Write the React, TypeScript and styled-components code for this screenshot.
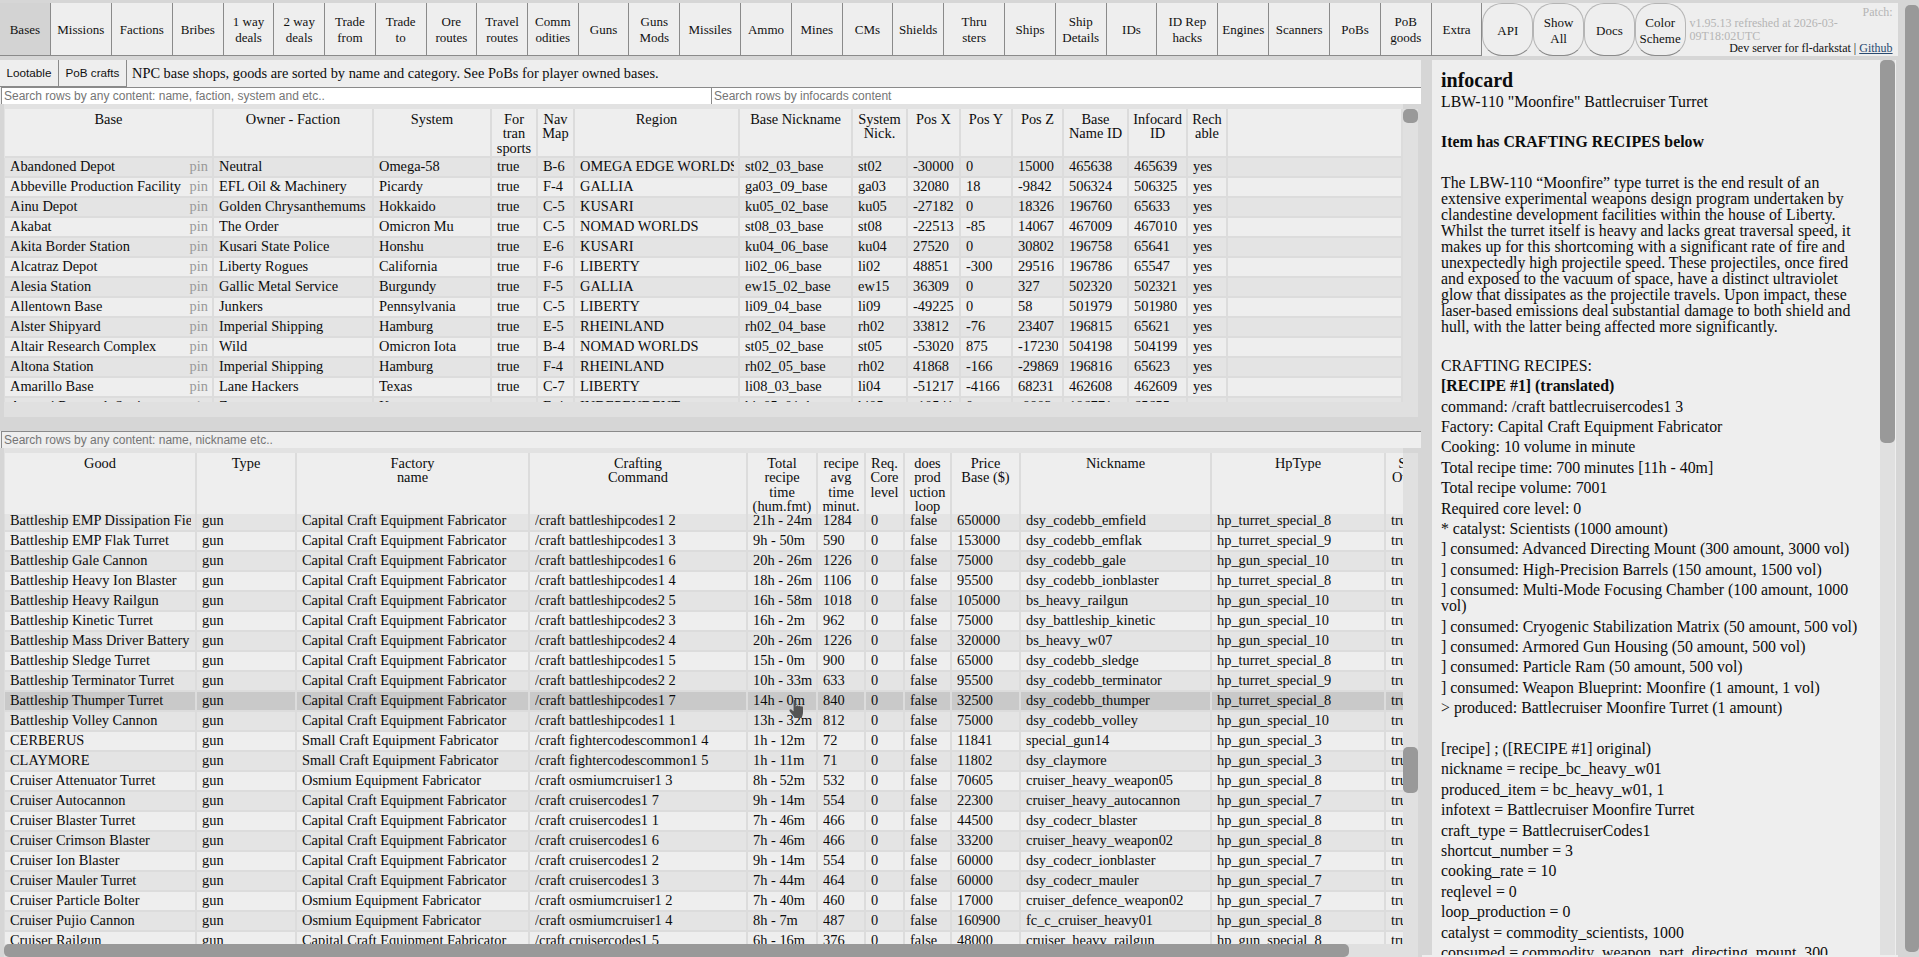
import React from "react";
import styled, { createGlobalStyle } from "styled-components";

const Global = createGlobalStyle`
  html, body { margin: 0; padding: 0; height: 100%; overflow: hidden; background: #d6d6d6; }
  body { font-family: "Liberation Serif", "Times New Roman", serif; color: #0c0c0c; }
  * { box-sizing: border-box; }
`;

const Root = styled.div`
  position: relative;
  display: flex;
  width: 1919px;
  height: 957px;
  overflow: hidden;
`;
const Page = styled.div`
  width: 1898px;
  padding-top: 3px;
  display: flex;
  flex-direction: column;
`;
const Gutter = styled.div`
  flex: 1;
  padding: 5px 0 0 7px;
`;
const GutterThumb = styled.div`
  width: 14px;
  height: 947px;
  background: #999;
  border-radius: 5px;
`;

const Nav = styled.nav`
  display: flex;
  height: 53px;
  background: #eee;
  flex: none;
`;
const Tab = styled.button<{ $wide?: boolean; $active?: boolean }>`
  width: ${(p) => (p.$wide ? "61.1px" : "50.72px")};
  height: 53px;
  flex: none;
  padding: 2px 0 0;
  margin: 0;
  border: none;
  border-right: 1px solid #8a8a8a;
  border-bottom: 1px solid #8a8a8a;
  background: ${(p) => (p.$active ? "#d3d3d3" : "#eee")};
  font: 13px/15.7px "Liberation Serif", serif;
  color: #111;
  white-space: pre-line;
`;
const RoundTab = styled.button`
  width: 50.8px;
  height: 53px;
  flex: none;
  padding: 2px 0 0;
  margin: 0;
  border: 1px solid #b5b5b5;
  border-bottom-color: #8a8a8a;
  border-radius: 20px;
  background: #eee;
  font: 13px/15.7px "Liberation Serif", serif;
  color: #111;
  white-space: pre-line;
`;
const NavInfo = styled.div`
  width: 203px;
  margin-left: 4px;
  padding-top: 3px;
  font-size: 12px;
  line-height: 12.3px;
`;
const Patch = styled.div`
  text-align: right;
  color: #b5b5b5;
  margin-bottom: -1px;
`;
const Version = styled.div`
  color: #b5b5b5;
`;
const DevLine = styled.div`
  text-align: right;
  color: #111;
  a { color: #2a4a70; text-decoration: underline; }
`;

const Main = styled.div`
  flex: 1;
  display: flex;
  margin-top: 4px;
  min-height: 0;
`;
const LeftCol = styled.div`
  width: 1421px;
  flex: none;
  display: flex;
  flex-direction: column;
`;
const SubBar = styled.div`
  height: 27px;
  background: #eee;
  display: flex;
  align-items: stretch;
  flex: none;
`;
const SubButton = styled.button<{ $w: number }>`
  width: ${(p) => p.$w}px;
  padding: 0 0 2px;
  margin: 0;
  border: none;
  border-right: 1px solid #8a8a8a;
  border-bottom: 1px solid #8a8a8a;
  background: #eee;
  font: 11.7px "Liberation Sans", Arial, sans-serif;
  color: #111;
`;
const SubText = styled.div`
  margin-left: 5px;
  font-size: 14.4px;
  line-height: 27px;
`;
const SearchRow = styled.div`
  display: flex;
  height: 17px;
  flex: none;
  padding-left: 1px;
  background: #eee;
`;
const SearchInput = styled.input<{ $dim?: boolean }>`
  flex: 1;
  min-width: 0;
  height: 17px;
  padding: 0 2px;
  border: none;
  border-top: 1px solid #8a8a8a;
  border-left: 1px solid #8a8a8a;
  border-radius: 0;
  outline: none;
  background: ${(p) => (p.$dim ? "#eee" : "#fff")};
  font: 12px "Liberation Sans", Arial, sans-serif;
  &::placeholder { color: #757575; opacity: 1; }
`;

const Frame = styled.section<{ $grow?: boolean }>`
  display: flex;
  background: #d6d6d6;
  padding: 5px 3px 0 4px;
  ${(p) => (p.$grow ? "flex: 1; min-height: 0;" : "height: 313px; flex: none;")}
`;
const Viewport = styled.div`
  width: 1399px;
  flex: none;
  display: flex;
  flex-direction: column;
  min-height: 0;
  margin-top: -5px;
  padding-top: 5px;
  background: #e2e2e2;
`;
const Clip = styled.div`
  flex: 1;
  min-height: 0;
  overflow: hidden;
  padding-left: 1px;
  background: #dcdcdc;
`;
const Scroller = styled.div<{ $offset: number }>`
  margin-top: ${(p) => -p.$offset}px;
`;
const HeadClip = styled.div`
  position: relative;
  z-index: 1;
  padding-left: 1px;
  overflow: hidden;
  flex: none;
`;
const Table = styled.table<{ $width: number }>`
  table-layout: fixed;
  border-collapse: separate;
  border-spacing: 0;
  width: ${(p) => p.$width}px;
`;
const Th = styled.th<{ $noGap?: boolean }>`
  background: #eee;
  border-right: 2px solid #dcdcdc;
  border-bottom: ${(p) => (p.$noGap ? "0" : "2px")} solid #dcdcdc;
  padding: 3px 1px 1px;
  font-weight: normal;
  font-size: 14.4px;
  line-height: 14.33px;
  text-align: center;
  vertical-align: top;
  white-space: pre-line;
  overflow: hidden;
`;
const Tr = styled.tr<{ $alt: boolean; $hot?: boolean }>`
  background: ${(p) => (p.$hot ? "#c9c9c9" : p.$alt ? "#e4e4e4" : "#eee")};
`;
const Td = styled.td`
  height: 20px;
  padding: 0 4px 0 5px;
  border-right: 2px solid #dcdcdc;
  border-bottom: 2px solid #dcdcdc;
  font-size: 14.4px;
  line-height: 17px;
  vertical-align: top;
`;
const CellText = styled.div`
  white-space: nowrap;
  overflow: hidden;
`;
const BaseCell = styled.div`
  display: flex;
  justify-content: space-between;
`;
const Pin = styled.span`
  color: #999;
`;
const HTrack = styled.div<{ $h: number }>`
  height: ${(p) => p.$h}px;
  flex: none;
  background: #e0e0e0;
`;
const HThumb = styled.div<{ $w: number }>`
  width: ${(p) => p.$w}px;
  height: 100%;
  background: #999;
  border-radius: 5px;
`;
const VTrack = styled.div`
  width: 15px;
  flex: none;
  background: #e0e0e0;
`;
const VThumb = styled.div<{ $top: number; $h: number }>`
  height: ${(p) => p.$h}px;
  margin-top: ${(p) => p.$top}px;
  background: #999;
  border-radius: 5px;
`;
const Gap = styled.div`
  height: 14px;
  flex: none;
`;
const SearchAlone = styled.div`
  height: 17px;
  flex: none;
  display: flex;
  padding-left: 1px;
  background: #eee;
`;

const RightCol = styled.div`
  flex: 1;
  padding-left: 11px;
  display: flex;
  flex-direction: column;
  min-width: 0;
`;
const Panel = styled.aside`
  width: 464px;
  height: 895px;
  flex: none;
  background: #eee;
  display: flex;
  overflow: hidden;
`;
const Card = styled.div`
  width: 448px;
  flex: none;
  padding: 9px 9px 0 9px;
  font-size: 15.84px;
  line-height: 16.2px;
  overflow: hidden;
`;
const CardTitle = styled.h2`
  margin: 0 0 1.5px;
  font-size: 20px;
  line-height: 23px;
  font-weight: bold;
`;
const CardBody = styled.div`
  width: 431px;
`;
const Line = styled.div<{ $bold?: boolean }>`
  min-height: 16.2px;
  margin-bottom: 4.2px;
  font-weight: ${(p) => (p.$bold ? "bold" : "normal")};
`;
const Prose = styled.div`
  margin-bottom: 2.4px;
  line-height: 16px;
`;
const BottomStrip = styled.div`
  height: 2px;
  margin-left: -10px;
  background: #eee;
`;
const Cursor = styled.svg`
  position: absolute;
  left: 788px;
  top: 699px;
`;

const bases: string[][] = [
  ["Abandoned Depot", "Neutral", "Omega-58", "B-6", "OMEGA EDGE WORLDS", "st02_03_base", "st02", "-30000", "0", "15000", "465638", "465639"],
  ["Abbeville Production Facility", "EFL Oil & Machinery", "Picardy", "F-4", "GALLIA", "ga03_09_base", "ga03", "32080", "18", "-9842", "506324", "506325"],
  ["Ainu Depot", "Golden Chrysanthemums", "Hokkaido", "C-5", "KUSARI", "ku05_02_base", "ku05", "-27182", "0", "18326", "196760", "65633"],
  ["Akabat", "The Order", "Omicron Mu", "C-5", "NOMAD WORLDS", "st08_03_base", "st08", "-22513", "-85", "14067", "467009", "467010"],
  ["Akita Border Station", "Kusari State Police", "Honshu", "E-6", "KUSARI", "ku04_06_base", "ku04", "27520", "0", "30802", "196758", "65641"],
  ["Alcatraz Depot", "Liberty Rogues", "California", "F-6", "LIBERTY", "li02_06_base", "li02", "48851", "-300", "29516", "196786", "65547"],
  ["Alesia Station", "Gallic Metal Service", "Burgundy", "F-5", "GALLIA", "ew15_02_base", "ew15", "36309", "0", "327", "502320", "502321"],
  ["Allentown Base", "Junkers", "Pennsylvania", "C-5", "LIBERTY", "li09_04_base", "li09", "-49225", "0", "58", "501979", "501980"],
  ["Alster Shipyard", "Imperial Shipping", "Hamburg", "E-5", "RHEINLAND", "rh02_04_base", "rh02", "33812", "-76", "23407", "196815", "65621"],
  ["Altair Research Complex", "Wild", "Omicron Iota", "B-4", "NOMAD WORLDS", "st05_02_base", "st05", "-53020", "875", "-17230", "504198", "504199"],
  ["Altona Station", "Imperial Shipping", "Hamburg", "F-4", "RHEINLAND", "rh02_05_base", "rh02", "41868", "-166", "-29869", "196816", "65623"],
  ["Amarillo Base", "Lane Hackers", "Texas", "C-7", "LIBERTY", "li08_03_base", "li04", "-51217", "-4166", "68231", "462608", "462609"],
  ["Aomori Research Station", "Zoners", "Kyoto", "E-4", "INDEPENDENT", "hi_05_01_base", "hi05", "-10541", "0", "-8803", "196771", "65655"],
];

const CAP = "Capital Craft Equipment Fabricator";
const OSM = "Osmium Equipment Fabricator";
const SMALL = "Small Craft Equipment Fabricator";
const goods: string[][] = [
  ["Battleship EMP Dissipation Field", CAP, "/craft battleshipcodes1 2", "21h - 24m", "1284", "650000", "dsy_codebb_emfield", "hp_turret_special_8"],
  ["Battleship EMP Flak Turret", CAP, "/craft battleshipcodes1 3", "9h - 50m", "590", "153000", "dsy_codebb_emflak", "hp_turret_special_9"],
  ["Battleship Gale Cannon", CAP, "/craft battleshipcodes1 6", "20h - 26m", "1226", "75000", "dsy_codebb_gale", "hp_gun_special_10"],
  ["Battleship Heavy Ion Blaster", CAP, "/craft battleshipcodes1 4", "18h - 26m", "1106", "95500", "dsy_codebb_ionblaster", "hp_turret_special_8"],
  ["Battleship Heavy Railgun", CAP, "/craft battleshipcodes2 5", "16h - 58m", "1018", "105000", "bs_heavy_railgun", "hp_gun_special_10"],
  ["Battleship Kinetic Turret", CAP, "/craft battleshipcodes2 3", "16h - 2m", "962", "75000", "dsy_battleship_kinetic", "hp_gun_special_10"],
  ["Battleship Mass Driver Battery", CAP, "/craft battleshipcodes2 4", "20h - 26m", "1226", "320000", "bs_heavy_w07", "hp_gun_special_10"],
  ["Battleship Sledge Turret", CAP, "/craft battleshipcodes1 5", "15h - 0m", "900", "65000", "dsy_codebb_sledge", "hp_turret_special_8"],
  ["Battleship Terminator Turret", CAP, "/craft battleshipcodes2 2", "10h - 33m", "633", "95500", "dsy_codebb_terminator", "hp_turret_special_9"],
  ["Battleship Thumper Turret", CAP, "/craft battleshipcodes1 7", "14h - 0m", "840", "32500", "dsy_codebb_thumper", "hp_turret_special_8"],
  ["Battleship Volley Cannon", CAP, "/craft battleshipcodes1 1", "13h - 32m", "812", "75000", "dsy_codebb_volley", "hp_gun_special_10"],
  ["CERBERUS", SMALL, "/craft fightercodescommon1 4", "1h - 12m", "72", "11841", "special_gun14", "hp_gun_special_3"],
  ["CLAYMORE", SMALL, "/craft fightercodescommon1 5", "1h - 11m", "71", "11802", "dsy_claymore", "hp_gun_special_3"],
  ["Cruiser Attenuator Turret", OSM, "/craft osmiumcruiser1 3", "8h - 52m", "532", "70605", "cruiser_heavy_weapon05", "hp_gun_special_8"],
  ["Cruiser Autocannon", CAP, "/craft cruisercodes1 7", "9h - 14m", "554", "22300", "cruiser_heavy_autocannon", "hp_gun_special_7"],
  ["Cruiser Blaster Turret", CAP, "/craft cruisercodes1 1", "7h - 46m", "466", "44500", "dsy_codecr_blaster", "hp_gun_special_8"],
  ["Cruiser Crimson Blaster", CAP, "/craft cruisercodes1 6", "7h - 46m", "466", "33200", "cruiser_heavy_weapon02", "hp_gun_special_8"],
  ["Cruiser Ion Blaster", CAP, "/craft cruisercodes1 2", "9h - 14m", "554", "60000", "dsy_codecr_ionblaster", "hp_gun_special_7"],
  ["Cruiser Mauler Turret", CAP, "/craft cruisercodes1 3", "7h - 44m", "464", "60000", "dsy_codecr_mauler", "hp_gun_special_7"],
  ["Cruiser Particle Bolter", OSM, "/craft osmiumcruiser1 2", "7h - 40m", "460", "17000", "cruiser_defence_weapon02", "hp_gun_special_7"],
  ["Cruiser Pujio Cannon", OSM, "/craft osmiumcruiser1 4", "8h - 7m", "487", "160900", "fc_c_cruiser_heavy01", "hp_gun_special_8"],
  ["Cruiser Railgun", CAP, "/craft cruisercodes1 5", "6h - 16m", "376", "48000", "cruiser_heavy_railgun", "hp_gun_special_8"],
];

const tabs: [string, boolean][] = [
  ["Bases", false], ["Missions", true], ["Factions", true], ["Bribes", false], ["1 way\ndeals", false],
  ["2 way\ndeals", false], ["Trade\nfrom", false], ["Trade\nto", false], ["Ore\nroutes", false], ["Travel\nroutes", false],
  ["Comm\nodities", false], ["Guns", false], ["Guns\nMods", false], ["Missiles", true], ["Ammo", false],
  ["Mines", false], ["CMs", false], ["Shields", false], ["Thru\nsters", true], ["Ships", false],
  ["Ship\nDetails", false], ["IDs", false], ["ID Rep\nhacks", true], ["Engines", false], ["Scanners", true],
  ["PoBs", false], ["PoB\ngoods", false], ["Extra", false],
];
const roundTabs = ["API", "Show\nAll", "Docs", "Color\nScheme"];

const baseCols = [209, 160, 118, 46, 37, 165, 113, 55, 53, 52, 51, 65, 59, 40, 175];
const baseHead = ["Base", "Owner - Faction", "System", "For\ntran\nsports", "Nav\nMap", "Region", "Base Nickname", "System\nNick.", "Pos X", "Pos Y", "Pos Z", "Base\nName ID", "Infocard\nID", "Rech\nable", ""];
const goodCols = [192, 100, 233, 218, 70, 48, 39, 47, 69, 191, 174, 53];
const goodHead = ["Good", "Type", "Factory\nname", "Crafting\nCommand", "Total\nrecipe\ntime\n(hum.fmt)", "recipe\navg\ntime\nminut.", "Req.\nCore\nlevel", "does\nprod\nuction\nloop", "Price\nBase ($)", "Nickname", "HpType", "Ship\nOwner"];

const sum = (a: number[]) => a.reduce((x, y) => x + y, 0);
const Cols = ({ widths }: { widths: number[] }) => (
  <colgroup>
    {widths.map((w, i) => (
      <col key={i} width={w} />
    ))}
  </colgroup>
);
const Cell = ({ children }: { children?: React.ReactNode }) => (
  <Td><CellText>{children}</CellText></Td>
);

const recipe = [
  "command: /craft battlecruisercodes1 3",
  "Factory: Capital Craft Equipment Fabricator",
  "Cooking: 10 volume in minute",
  "Total recipe time: 700 minutes [11h - 40m]",
  "Total recipe volume: 7001",
  "Required core level: 0",
  "* catalyst: Scientists (1000 amount)",
  "] consumed: Advanced Directing Mount (300 amount, 3000 vol)",
  "] consumed: High-Precision Barrels (150 amount, 1500 vol)",
  "] consumed: Multi-Mode Focusing Chamber (100 amount, 1000 vol)",
  "] consumed: Cryogenic Stabilization Matrix (50 amount, 500 vol)",
  "] consumed: Armored Gun Housing (50 amount, 500 vol)",
  "] consumed: Particle Ram (50 amount, 500 vol)",
  "] consumed: Weapon Blueprint: Moonfire (1 amount, 1 vol)",
  "> produced: Battlecruiser Moonfire Turret (1 amount)",
];
const original = [
  "[recipe] ; ([RECIPE #1] original)",
  "nickname = recipe_bc_heavy_w01",
  "produced_item = bc_heavy_w01, 1",
  "infotext = Battlecruiser Moonfire Turret",
  "craft_type = BattlecruiserCodes1",
  "shortcut_number = 3",
  "cooking_rate = 10",
  "reqlevel = 0",
  "loop_production = 0",
  "catalyst = commodity_scientists, 1000",
  "consumed = commodity_weapon_part_directing_mount, 300",
];

export default function App() {
  return (
    <Root>
      <Global />
      <Page>
        <Nav>
          {tabs.map(([t, wide], i) => (
            <Tab key={t} $wide={wide} $active={i === 0}>{t}</Tab>
          ))}
          {roundTabs.map((t) => (
            <RoundTab key={t}>{t}</RoundTab>
          ))}
          <NavInfo>
            <Patch>Patch:</Patch>
            <Version>v1.95.13 refreshed at 2026-03-09T18:02UTC</Version>
            <DevLine>Dev server for fl-darkstat | <a href="#github">Github</a></DevLine>
          </NavInfo>
        </Nav>
        <Main>
          <LeftCol>
            <SubBar>
              <SubButton $w={59}>Lootable</SubButton>
              <SubButton $w={68}>PoB crafts</SubButton>
              <SubText>NPC base shops, goods are sorted by name and category. See PoBs for player owned bases.</SubText>
            </SubBar>
            <SearchRow>
              <SearchInput placeholder="Search rows by any content: name, faction, system and etc.." />
              <SearchInput placeholder="Search rows by infocards content" />
            </SearchRow>
            <Frame>
              <Viewport>
                <HeadClip>
                  <Table $width={sum(baseCols)}>
                    <Cols widths={baseCols} />
                    <thead>
                      <tr>{baseHead.map((h, i) => <Th key={i}>{h}</Th>)}</tr>
                    </thead>
                  </Table>
                </HeadClip>
                <Clip>
                  <Table $width={sum(baseCols)}>
                    <Cols widths={baseCols} />
                    <tbody>
                      {bases.map((r, i) => (
                        <Tr key={r[0]} $alt={i % 2 === 0}>
                          <Cell><BaseCell><span>{r[0]}</span><Pin>pin</Pin></BaseCell></Cell>
                          <Cell>{r[1]}</Cell>
                          <Cell>{r[2]}</Cell>
                          <Cell>true</Cell>
                          {r.slice(3).map((c, j) => <Cell key={j}>{c}</Cell>)}
                          <Cell>yes</Cell>
                          <Cell />
                        </Tr>
                      ))}
                    </tbody>
                  </Table>
                </Clip>
                <HTrack $h={15} />
              </Viewport>
              <VTrack><VThumb $top={0} $h={14} /></VTrack>
            </Frame>
            <Gap />
            <SearchAlone>
              <SearchInput $dim placeholder="Search rows by any content: name, nickname etc.." />
            </SearchAlone>
            <Frame $grow>
              <Viewport>
                <HeadClip>
                  <Table $width={sum(goodCols)}>
                    <Cols widths={goodCols} />
                    <thead>
                      <tr>{goodHead.map((h, i) => <Th key={i} $noGap>{h}</Th>)}</tr>
                    </thead>
                  </Table>
                </HeadClip>
                <Clip>
                  <Scroller $offset={2}>
                    <Table $width={sum(goodCols)}>
                      <Cols widths={goodCols} />
                      <tbody>
                        {goods.map((r, i) => (
                          <Tr key={r[0]} $alt={i % 2 === 0} $hot={i === 9}>
                            <Cell>{r[0]}</Cell>
                            <Cell>gun</Cell>
                            <Cell>{r[1]}</Cell>
                            <Cell>{r[2]}</Cell>
                            <Cell>{r[3]}</Cell>
                            <Cell>{r[4]}</Cell>
                            <Cell>0</Cell>
                            <Cell>false</Cell>
                            <Cell>{r[5]}</Cell>
                            <Cell>{r[6]}</Cell>
                            <Cell>{r[7]}</Cell>
                            <Cell>true</Cell>
                          </Tr>
                        ))}
                      </tbody>
                    </Table>
                  </Scroller>
                </Clip>
                <HTrack $h={13}><HThumb $w={1345} /></HTrack>
              </Viewport>
              <VTrack><VThumb $top={294} $h={46} /></VTrack>
            </Frame>
          </LeftCol>
          <RightCol>
            <Panel>
              <Card>
                <CardTitle>infocard</CardTitle>
                <CardBody>
                  <Line>LBW-110 "Moonfire" Battlecruiser Turret</Line>
                  <Line />
                  <Line $bold>Item has CRAFTING RECIPES below</Line>
                  <Line />
                  <Prose>
                    The LBW-110 “Moonfire” type turret is the end result of an extensive experimental weapons design program undertaken by clandestine development facilities within the house of Liberty. Whilst the turret itself is heavy and lacks great traversal speed, it makes up for this shortcoming with a significant rate of fire and unexpectedly high projectile speed. These projectiles, once fired and exposed to the vacuum of space, have a distinct ultraviolet glow that dissipates as the projectile travels. Upon impact, these laser-based emissions deal substantial damage to both shield and hull, with the latter being affected more significantly.
                  </Prose>
                  <Line />
                  <Line>CRAFTING RECIPES:</Line>
                  <Line $bold>[RECIPE #1] (translated)</Line>
                  {recipe.map((l) => <Line key={l}>{l}</Line>)}
                  <Line />
                  {original.map((l) => <Line key={l}>{l}</Line>)}
                </CardBody>
              </Card>
              <VTrack><VThumb $top={0} $h={383} /></VTrack>
            </Panel>
            <BottomStrip />
          </RightCol>
        </Main>
      </Page>
      <Gutter><GutterThumb /></Gutter>
      <Cursor width="20" height="20" viewBox="0 0 18 18">
        <path d="M5 1.5C5 .6 7 .6 7 1.5V7l.3-.5C7.500 5.600 9.200 5.600 9.400 6.700 9.600 5.900 11.300 5.900 11.500 7 11.800 6.300 13.500 6.400 13.500 7.600V12C13.500 14 12.800 15.500 12.300 17H6C5 15 2.500 12.500 1.500 11 .8 9.900 2.200 8.800 3.200 9.600L5 11Z" fill="#555" />
      </Cursor>
    </Root>
  );
}
